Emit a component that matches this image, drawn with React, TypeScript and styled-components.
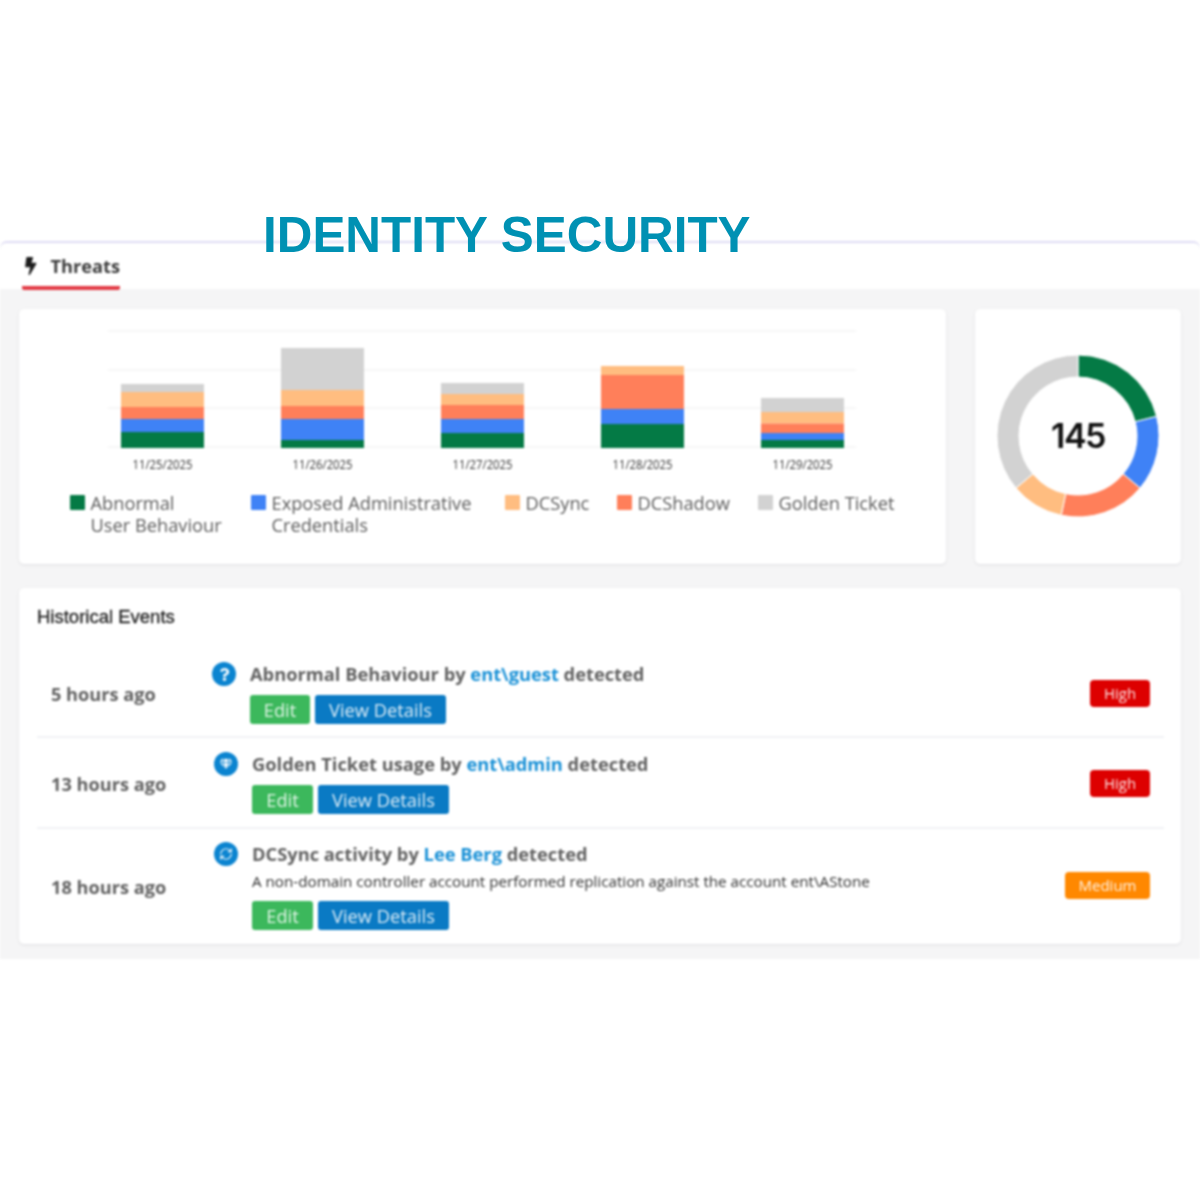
import React from "react";
import styled, { createGlobalStyle } from "styled-components";
import { FaBolt, FaGem, FaQuestion } from "react-icons/fa";
import { RefreshCw } from "lucide-react";

const GREEN = "#047a45";
const BLUE = "#3f82f6";
const ORANGE = "#ff7f5a";
const PEACH = "#ffbd80";
const GREY = "#d2d2d2";

const GlobalStyle = createGlobalStyle`
  html, body {
    margin: 0;
    background: #fff;
    font-family: "Open Sans", "Liberation Sans", sans-serif;
  }
`;

const Page = styled.div`
  position: relative;
  width: 1200px;
  height: 1200px;
  padding-top: 241px;
  box-sizing: border-box;
  overflow: hidden;
  background: #fff;
`;

const Heading = styled.h1`
  position: absolute;
  z-index: 2;
  top: 205px;
  left: 263px;
  margin: 0;
  font-family: "Liberation Sans", Arial, sans-serif;
  font-size: 49.4px;
  line-height: 60px;
  font-weight: 700;
  white-space: nowrap;
  color: #0091b3;
`;

const Panel = styled.div`
  box-sizing: border-box;
  height: 718px;
  border-top: 2px solid #dfdcf4;
  border-radius: 7px 7px 0 0;
  background: #f5f5f6;
  filter: blur(0.8px);
`;

const TabBar = styled.div`
  height: 46px;
  padding-left: 22px;
  background: #fff;
  border-radius: 7px 7px 0 0;
`;

const Tab = styled.div`
  display: flex;
  align-items: center;
  gap: 14px;
  box-sizing: border-box;
  width: 98px;
  height: 47px;
  padding: 3px 0 0 3px;
  border-bottom: 4px solid #e23a44;
  border-radius: 0 0 2px 2px;
  font-size: 18.2px;
  font-weight: 700;
  color: #3c3c3c;
  white-space: nowrap;
`;

const Content = styled.div`
  display: flex;
  flex-direction: column;
  gap: 24px;
  padding: 20px 19px 0;
`;

const TopRow = styled.div`
  display: flex;
  gap: 29px;
`;

const Card = styled.section`
  box-sizing: border-box;
  border-radius: 5px;
  background: #fff;
  box-shadow: 0 1px 3px rgba(40, 40, 60, 0.1);
`;

const ChartCard = styled(Card)`
  width: 927px;
  height: 255px;
  padding-top: 14px;
`;

const DonutCard = styled(Card)`
  display: flex;
  align-items: center;
  justify-content: center;
  position: relative;
  width: 206px;
  height: 255px;
  padding-bottom: 2px;
`;

const ChartSvg = styled.svg`
  display: block;
`;

const AxisLabel = styled.text`
  font-family: "Open Sans", sans-serif;
  font-size: 12px;
  fill: #333;
  text-anchor: middle;
`;

const Legend = styled.div`
  display: flex;
  align-items: flex-start;
  margin-top: 18.5px;
  padding-left: 51px;
`;

const LegendItem = styled.div<{ $width: number }>`
  display: flex;
  gap: 5.5px;
  width: ${(props) => props.$width}px;
  flex: none;
  font-size: 18.25px;
  line-height: 22px;
  color: #5c5c5c;
`;

const Swatch = styled.span<{ $color: string }>`
  flex: none;
  width: 15px;
  height: 15px;
  margin-top: 3px;
  border-radius: 1px;
  background: ${(props) => props.$color};
`;

const DonutValue = styled.div`
  position: absolute;
  top: 105px;
  left: 0;
  right: 0;
  text-align: center;
  font-family: Inter, "Liberation Sans", sans-serif;
  font-size: 34px;
  line-height: 44px;
  font-weight: 600;
  letter-spacing: -1.5px;
  color: #111;
`;

const EventsCard = styled(Card)`
  height: 356px;
  padding: 18px 17px 0 18px;
`;

const EventsTitle = styled.h2`
  margin: 0 0 20px;
  font-family: "Liberation Sans", Arial, sans-serif;
  font-size: 18.5px;
  line-height: 22px;
  font-weight: 400;
  color: #1f1f1f;
  -webkit-text-stroke: 0.3px #1f1f1f;
`;

const EventRow = styled.div<{ $height: number; $top: number }>`
  display: flex;
  align-items: flex-start;
  box-sizing: border-box;
  height: ${(props) => props.$height}px;
  padding: ${(props) => props.$top}px 14px 0;
  & + & {
    border-top: 2px solid #f1f2f5;
  }
`;

const Time = styled.div<{ $width: number; $offset: number }>`
  flex: none;
  width: ${(props) => props.$width}px;
  margin-top: ${(props) => props.$offset}px;
  font-size: 18.2px;
  line-height: 24px;
  font-weight: 700;
  color: #626262;
`;

const IconBadge = styled.span`
  display: flex;
  flex: none;
  align-items: center;
  justify-content: center;
  width: 24px;
  height: 24px;
  margin-right: 14px;
  border-radius: 50%;
  background: #0b84d0;
  color: #f2f9fd;
`;

const EventBody = styled.div`
  flex: 1;
`;

const EventTitle = styled.div`
  font-size: 18.3px;
  line-height: 24px;
  font-weight: 700;
  color: #626262;
  white-space: nowrap;
`;

const UserLink = styled.span`
  color: #1890d6;
`;

const Description = styled.div`
  margin-top: 4px;
  font-size: 15.2px;
  line-height: 22px;
  color: #333;
  white-space: nowrap;
`;

const Actions = styled.div`
  display: flex;
  gap: 5px;
  margin-top: 9px;
`;

const ActionButton = styled.button<{ $color: string; $width: number }>`
  box-sizing: border-box;
  width: ${(props) => props.$width}px;
  height: 29px;
  padding: 0;
  border: 0;
  border-radius: 3px;
  background: ${(props) => props.$color};
  font-family: "Open Sans", sans-serif;
  font-size: 18.3px;
  line-height: 29px;
  color: rgba(255, 255, 255, 0.85);
`;

const Severity = styled.span<{ $color: string; $width: number; $offset: number }>`
  flex: none;
  box-sizing: border-box;
  width: ${(props) => props.$width}px;
  height: 27px;
  margin-top: ${(props) => props.$offset}px;
  border-radius: 4px;
  background: ${(props) => props.$color};
  font-size: 15px;
  line-height: 27px;
  text-align: center;
  color: rgba(255, 255, 255, 0.9);
`;

const bars = [
  { x: 102, label: "11/25/2025", stops: [384, 392, 407, 419, 432, 448] },
  { x: 262, label: "11/26/2025", stops: [348, 390, 406, 419, 440, 448] },
  { x: 422, label: "11/27/2025", stops: [383, 394, 405, 419, 433, 448] },
  { x: 582, label: "11/28/2025", stops: [366, 366, 375, 409, 424, 448] },
  { x: 742, label: "11/29/2025", stops: [398, 412, 423.5, 433, 440, 448] },
];

const barColors = [GREY, PEACH, ORANGE, BLUE, GREEN];

const legend = [
  { color: GREEN, label: "Abnormal", second: "User Behaviour", width: 181 },
  { color: BLUE, label: "Exposed Administrative", second: "Credentials", width: 254 },
  { color: PEACH, label: "DCSync", width: 112 },
  { color: ORANGE, label: "DCShadow", width: 141 },
  { color: GREY, label: "Golden Ticket", width: 170 },
];

// chart coordinates below are page y's, hence the viewBox offset
const BarChart = () => (
  <ChartSvg width={927} height={150} viewBox="0 323 927 150">
    {[331, 370, 408, 447].map((y) => (
      <line key={y} x1={89} x2={837} y1={y} y2={y} stroke="#f5f5f5" strokeWidth={1.5} />
    ))}
    {bars.map((bar) => (
      <g key={bar.label}>
        {barColors.map((color, i) => (
          <rect
            key={color}
            x={bar.x}
            y={bar.stops[i]}
            width={83}
            height={bar.stops[i + 1] - bar.stops[i]}
            fill={color}
          />
        ))}
        <AxisLabel x={bar.x + 41.5} y={469} textLength={60} lengthAdjust="spacingAndGlyphs">
          {bar.label}
        </AxisLabel>
      </g>
    ))}
  </ChartSvg>
);

const polar = (deg: number, r: number) => {
  const a = ((deg - 90) * Math.PI) / 180;
  return `${(90 + r * Math.cos(a)).toFixed(2)} ${(90 + r * Math.sin(a)).toFixed(2)}`;
};

const arc = (from: number, to: number, outer: number, inner: number) => {
  const large = to - from > 180 ? 1 : 0;
  return `M${polar(from, outer)} A${outer} ${outer} 0 ${large} 1 ${polar(to, outer)} L${polar(to, inner)} A${inner} ${inner} 0 ${large} 0 ${polar(from, inner)} Z`;
};

const segments = [
  { from: 0, to: 76, color: GREEN },
  { from: 76, to: 130, color: BLUE },
  { from: 130, to: 192, color: ORANGE },
  { from: 192, to: 230, color: PEACH },
  { from: 230, to: 360, color: GREY },
];

const Donut = () => (
  <svg width={180} height={180} viewBox="0 0 180 180">
    {segments.map((s) => (
      <path key={s.color} d={arc(s.from, s.to, 81, 59)} fill={s.color} stroke="#fff" strokeWidth={1} />
    ))}
  </svg>
);

const events = [
  {
    time: "5 hours ago",
    timeWidth: 161,
    timeOffset: 20,
    top: 14,
    icon: <FaQuestion size={13} />,
    lead: "Abnormal Behaviour by ",
    user: "ent\\guest",
    height: 88,
    editWidth: 60,
    severity: "High",
    severityColor: "#dd0000",
    severityWidth: 60,
    severityOffset: 18,
  },
  {
    time: "13 hours ago",
    timeWidth: 163,
    timeOffset: 20,
    top: 14,
    icon: <FaGem size={12} />,
    lead: "Golden Ticket usage by ",
    user: "ent\\admin",
    height: 91,
    editWidth: 61,
    severity: "High",
    severityColor: "#dd0000",
    severityWidth: 60,
    severityOffset: 18,
  },
  {
    time: "18 hours ago",
    timeWidth: 163,
    timeOffset: 33,
    top: 13,
    icon: <RefreshCw size={14} strokeWidth={2} />,
    lead: "DCSync activity by ",
    user: "Lee Berg",
    description: "A non-domain controller account performed replication against the account ent\\AStone",
    height: 114,
    editWidth: 61,
    severity: "Medium",
    severityColor: "#ff8800",
    severityWidth: 85,
    severityOffset: 30,
  },
];

export default function App() {
  return (
    <Page>
      <GlobalStyle />
      <Heading>IDENTITY SECURITY</Heading>
      <Panel>
        <TabBar>
          <Tab>
            <FaBolt size={18} color="#1d1d1d" />
            Threats
          </Tab>
        </TabBar>
        <Content>
          <TopRow>
            <ChartCard>
              <BarChart />
              <Legend>
                {legend.map((item) => (
                  <LegendItem key={item.label} $width={item.width}>
                    <Swatch $color={item.color} />
                    <span>
                      {item.label}
                      {item.second && <br />}
                      {item.second}
                    </span>
                  </LegendItem>
                ))}
              </Legend>
            </ChartCard>
            <DonutCard>
              <Donut />
              <DonutValue>145</DonutValue>
            </DonutCard>
          </TopRow>
          <EventsCard>
            <EventsTitle>Historical Events</EventsTitle>
            {events.map((event) => (
              <EventRow key={event.time} $height={event.height} $top={event.top}>
                <Time $width={event.timeWidth} $offset={event.timeOffset}>
                  {event.time}
                </Time>
                <IconBadge>{event.icon}</IconBadge>
                <EventBody>
                  <EventTitle>
                    {event.lead}
                    <UserLink>{event.user}</UserLink> detected
                  </EventTitle>
                  {event.description && <Description>{event.description}</Description>}
                  <Actions>
                    <ActionButton $color="#3cb85c" $width={event.editWidth}>Edit</ActionButton>
                    <ActionButton $color="#0a7ac4" $width={131}>View Details</ActionButton>
                  </Actions>
                </EventBody>
                <Severity
                  $color={event.severityColor}
                  $width={event.severityWidth}
                  $offset={event.severityOffset}
                >
                  {event.severity}
                </Severity>
              </EventRow>
            ))}
          </EventsCard>
        </Content>
      </Panel>
    </Page>
  );
}
